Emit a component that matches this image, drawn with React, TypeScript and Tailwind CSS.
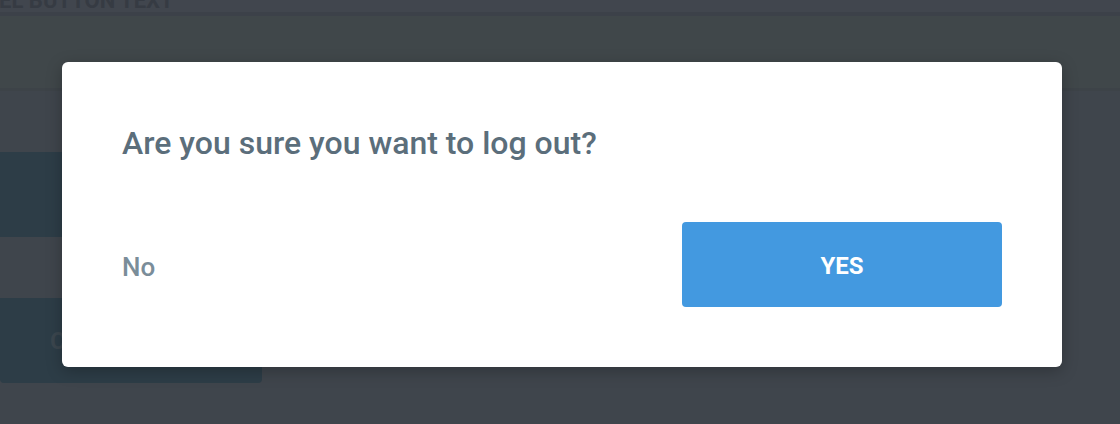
export default function App() {
  return (
    <div className="relative h-[424px] w-[1120px] overflow-hidden bg-[#3f454c] font-['Roboto',sans-serif]">
      {/* page behind the overlay */}
      <div className="relative h-[12px] overflow-hidden bg-[#41464e]">
        <span className="absolute -left-[60px] -top-[10px] text-[22px] font-bold uppercase leading-[22px] text-[#363b43]">
          Cancel button text
        </span>
      </div>
      <div className="h-[4px] bg-[#3c4149]" />
      <div className="h-[72px] bg-[#40474a]" />
      <div className="h-[3px] bg-[#3d4348]" />
      <div className="h-[61px]" />
      <div className="h-[85px] w-[900px] bg-[#2d3d47]" />
      <div className="h-[61px]" />
      <div className="flex h-[85px] w-[262px] items-center rounded-b-[4px] bg-[#2d3d47] pl-[50px]">
        <span className="text-[24px] font-bold uppercase text-[#3b464e]">Continue</span>
      </div>

      {/* dialog */}
      <div className="absolute left-[62px] top-[62px] flex h-[305px] w-[1000px] flex-col rounded-[6px] bg-white px-[60px] pt-[61px] shadow-[0_4px_16px_rgba(0,0,0,0.25)]">
        <h2 className="text-[32px] font-medium leading-[40px] text-[#5b6e7b]">
          Are you sure you want to log out?
        </h2>
        <div className="mt-[59px] flex items-center justify-between">
          <button type="button" className="mt-[4px] text-[26px] font-medium leading-[32px] text-[#7a8d99]">
            No
          </button>
          <button
            type="button"
            className="flex h-[85px] w-[320px] items-center justify-center rounded-[4px] bg-[#4399e0] pt-[2px] text-[24px] font-bold text-white"
          >
            YES
          </button>
        </div>
      </div>
    </div>
  )
}
